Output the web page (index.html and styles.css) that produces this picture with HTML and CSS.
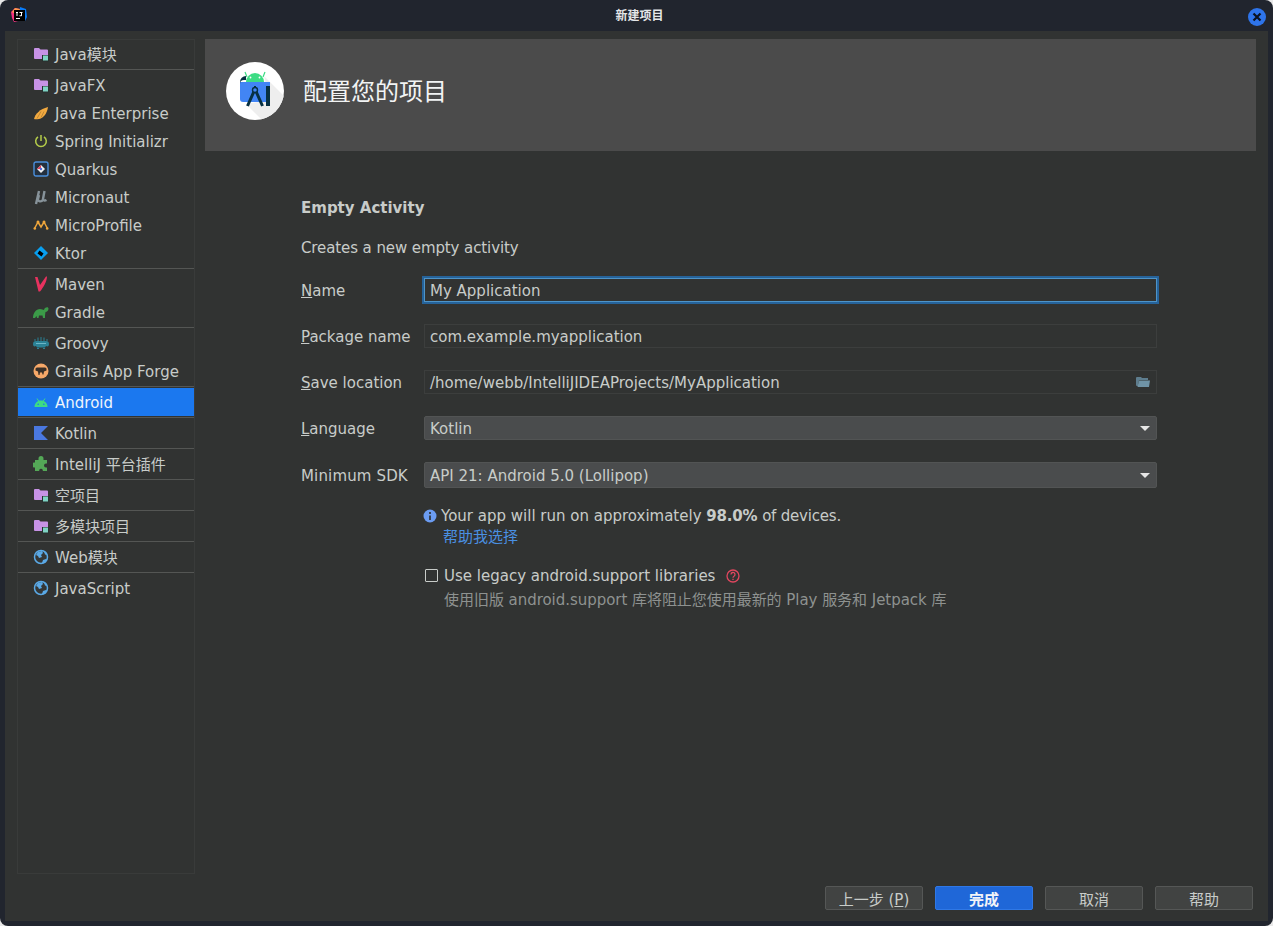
FILE: index.html
```html
<!DOCTYPE html>
<html lang="zh">
<head>
    <meta charset="UTF-8">
    <title>新建项目</title>
    <link rel="stylesheet" href="styles.css">
</head>
<body>
    <div class="window">
        <header class="titlebar">
            <svg class="app-icon" width="16" height="16" viewBox="0 0 16 16">
                <path d="M0 5l4-4 5 1-2 12-4 1-2-4z" fill="#f5317f"/>
                <path d="M9 0l6 2 1 8-2 4-6-6z" fill="#087cfa"/>
                <path d="M1 5l3-4 5 1-3 6z" fill="#fc9a4a"/>
                <rect x="3" y="3" width="11" height="11" fill="#000"/>
                <path d="M5 5h2v1H6.500v3H5.500V6H5zM8.500 5h3v1H11v2.500c0 .5-.5.8-1 .8H8.500v-1H10V6H8.500zM5 11h4v1H5z" fill="#fff"/>
            </svg>
            <span class="window-title">新建项目</span>
            <span class="close-btn">
                <svg width="10" height="10" viewBox="0 0 10 10"><path d="M1.500 1.500l7 7M8.500 1.500l-7 7" stroke="#0b1220" stroke-width="2.200"/></svg>
            </span>
        </header>
        <div class="panel">
            <div class="main">
                <nav class="sidebar">
                    <div class="item cjk">
                        <svg class="icon" viewBox="0 0 16 16"><use href="#module"/></svg>Java模块
                    </div>
                    <div class="sep"></div>
                    <div class="item">
                        <svg class="icon" viewBox="0 0 16 16"><use href="#module"/></svg>JavaFX
                    </div>
                    <div class="item">
                        <svg class="icon" viewBox="0 0 16 16"><path d="M1 14c1-5 6-10 14-12-1 6-4 11-9 12-2 .3-4 .3-5 0z" fill="#f2a93f"/><path d="M4 13.500l4-7M8 12.500l3-6" stroke="#a87a30" stroke-width=".7"/></svg>Java Enterprise
                    </div>
                    <div class="item">
                        <svg class="icon" viewBox="0 0 16 16"><path d="M5 3.800a5.300 5.300 0 1 0 6 0" fill="none" stroke="#b4cc4a" stroke-width="1.500"/><path d="M8 2v6" stroke="#b4cc4a" stroke-width="1.500"/></svg>Spring Initializr
                    </div>
                    <div class="item">
                        <svg class="icon" viewBox="0 0 16 16"><rect x="1" y="1" width="14" height="14" rx="2" fill="#24303e" stroke="#4a8fdc" stroke-width="1.400"/><path d="M8 4l4 4-4 4-4-4z" fill="#f0f0f0"/><path d="M8 4L4 8l4 0z" fill="#e0405a"/><circle cx="8" cy="8" r="1.200" fill="#4a6fdc"/></svg>Quarkus
                    </div>
                    <div class="item">
                        <svg class="icon" viewBox="0 0 16 16"><path d="M6 2L3 15M6 6l-1 4c-.5 2.500 3.500 3.500 5 .5M11.500 2L10 10c-.3 1.500 1.500 2 3.500 1" fill="none" stroke="#87939a" stroke-width="2.400"/></svg>Micronaut
                    </div>
                    <div class="item">
                        <svg class="icon" viewBox="0 0 16 16"><path d="M1.500 11.500L5 5l3 5 3-5 3.500 6.500" fill="none" stroke="#f0a73c" stroke-width="1.500"/><circle cx="5" cy="5" r="1.500" fill="#f0a73c"/><circle cx="11" cy="5" r="1.500" fill="#f0a73c"/><circle cx="1.800" cy="11.500" r="1.300" fill="#f0a73c"/><circle cx="14.200" cy="11.500" r="1.300" fill="#f0a73c"/></svg>MicroProfile
                    </div>
                    <div class="item">
                        <svg class="icon" viewBox="0 0 16 16"><path d="M8 1l7 7-7 7-7-7z" fill="#089ff0"/><path d="M6.500 5.500l4 3-2 3-4-3z" fill="#000"/></svg>Ktor
                    </div>
                    <div class="sep"></div>
                    <div class="item">
                        <svg class="icon" viewBox="0 0 16 16"><path d="M2 1h2.500L7 9l6-8.500h1c0 4.500-3.500 11-7 15H5.500z" fill="#e8325f"/></svg>Maven
                    </div>
                    <div class="item">
                        <svg class="icon" viewBox="0 0 16 16"><path d="M0 14c0-5 3-9 7-9 2 0 3 1 4 1 0-2 4-4 4.500-1.500 0 2-1.500 3.500-3 3.500-.5 2-.5 4-.5 6H10l-.5-2.500H6L5.500 14H4l-.5-2-1.500 2z" fill="#3b9a48"/></svg>Gradle
                    </div>
                    <div class="sep"></div>
                    <div class="item">
                        <svg class="icon" viewBox="0 0 16 16"><path d="M0 9c0-2 1-3 3-3h10c2 0 3 1 3 3s-1 3-3 2l-1 1.500H4L3 11c-2 1-3 0-3-2z" fill="#2b8296"/><path d="M2 6V4M5 6V2.500M8 6V2M11 6V2.500M14 6V4" stroke="#2b8296"/><path d="M3 8.500h10" stroke="#7fc4d2" stroke-width=".8"/><path d="M4 13.500h2M10 13.500h2" stroke="#2b8296" stroke-width="1.200"/></svg>Groovy
                    </div>
                    <div class="item">
                        <svg class="icon" viewBox="0 0 16 16"><circle cx="8" cy="8" r="7.500" fill="#f7a868"/><path d="M2.500 6c0-1 1-1.500 2-1.500h7c1 0 2 .5 2 1.500v1.500l-2.500 1-.5 3h-1L9 9.500H7l-.5 2.500h-1L5 8.500l-2.500-1z" fill="#3a3028"/></svg>Grails App Forge
                    </div>
                    <div class="sep"></div>
                    <div class="item selected">
                        <svg class="icon" viewBox="0 0 16 16"><path d="M1.500 13c0-4 3-6.500 6.500-6.500s6.500 2.500 6.500 6.500z" fill="#3ddc84"/><path d="M4 4.500l2 3M12 4.500l-2 3" stroke="#3ddc84"/><circle cx="5.200" cy="10.200" r=".8" fill="#1b78ef"/><circle cx="10.800" cy="10.200" r=".8" fill="#1b78ef"/></svg>Android
                    </div>
                    <div class="sep"></div>
                    <div class="item">
                        <svg class="icon" viewBox="0 0 16 16"><path d="M1 1h14L8 8l7 7H1z" fill="#4a78e0"/></svg>Kotlin
                    </div>
                    <div class="sep"></div>
                    <div class="item cjk">
                        <svg class="icon" viewBox="0 0 16 16"><path d="M5.500 2.500a2.500 2.500 0 0 1 5 0V4H14v3.500h-1a2 2 0 0 0 0 4h1V15H9.800v-1a2 2 0 0 0-3.600 0v1H2v-3.500H1a2.500 2.500 0 0 1 0-5h1V4h3.500z" fill="#54a857"/></svg>IntelliJ 平台插件
                    </div>
                    <div class="sep"></div>
                    <div class="item cjk">
                        <svg class="icon" viewBox="0 0 16 16"><use href="#module"/></svg>空项目
                    </div>
                    <div class="sep"></div>
                    <div class="item cjk">
                        <svg class="icon" viewBox="0 0 16 16"><use href="#module"/></svg>多模块项目
                    </div>
                    <div class="sep"></div>
                    <div class="item cjk">
                        <svg class="icon" viewBox="0 0 16 16"><use href="#globe"/></svg>Web模块
                    </div>
                    <div class="sep"></div>
                    <div class="item">
                        <svg class="icon" viewBox="0 0 16 16"><use href="#globe"/></svg>JavaScript
                    </div>
                </nav>
                <section class="content">
                    <div class="banner">
                        <div class="logo">
                            <svg width="58" height="58" viewBox="0 0 58 58">
                                <path d="M38 14l20 20v24H36L20 42l24-4z" fill="#eeeeee"/>
                                <path d="M21 15l-2-5M37 15l2-5" stroke="#3ddc84" stroke-width="1.200"/>
                                <path d="M20 20a9 9 0 0 1 18 0z" fill="#3ddc84"/>
                                <circle cx="24.500" cy="15.500" r=".9" fill="#fff"/>
                                <circle cx="33.500" cy="15.500" r=".9" fill="#fff"/>
                                <path d="M14 20h30v20H17a3 3 0 0 1-3-3z" fill="#4285f4"/>
                                <path d="M14 20a6 6 0 0 1 6-6v4h-2a4 4 0 0 0-4 4z" fill="#073042"/>
                                <rect x="40" y="24" width="4" height="20" fill="#073042"/>
                                <path d="M29 27l-7.500 17M29 27l7.500 17" stroke="#073042" stroke-width="3" fill="none"/>
                                <path d="M29 27v-3" stroke="#073042" stroke-width="2"/>
                                <circle cx="29" cy="28" r="2.500" fill="#4285f4" stroke="#073042" stroke-width="1.400"/>
                            </svg>
                        </div>
                        <h1 class="banner-title">配置您的项目</h1>
                    </div>
                    <div class="form">
                        <h2 class="form-title">Empty Activity</h2>
                        <p class="form-desc">Creates a new empty activity</p>
                        <div class="row">
                            <label><u>N</u>ame</label>
                            <div class="field focused">My Application</div>
                        </div>
                        <div class="row">
                            <label><u>P</u>ackage name</label>
                            <div class="field">com.example.myapplication</div>
                        </div>
                        <div class="row">
                            <label><u>S</u>ave location</label>
                            <div class="field">
                                /home/webb/IntelliJIDEAProjects/MyApplication
                                <svg class="folder" width="16" height="16" viewBox="0 0 16 16"><path d="M1 4a1 1 0 0 1 1-1h4l1 1h6v2H4L3 12H2a1 1 0 0 1-1-1z" fill="#5e7d8e"/><path d="M4 6.500h11L14 13H2.500z" fill="#6f93a6"/></svg>
                            </div>
                        </div>
                        <div class="row">
                            <label><u>L</u>anguage</label>
                            <div class="select">Kotlin<span class="caret"></span></div>
                        </div>
                        <div class="row sdk">
                            <label>Minimum SDK</label>
                            <div class="select">API 21: Android 5.0 (Lollipop)<span class="caret"></span></div>
                        </div>
                        <div class="notes">
                            <div class="note-line">
                                <svg class="info" width="14" height="14" viewBox="0 0 14 14"><circle cx="7" cy="7" r="6.500" fill="#6b9cf2"/><path d="M7 3v2M7 6.500V11" stroke="#2b2d2c" stroke-width="1.600"/></svg>
                                <span class="note-text">Your app will run on approximately <b>98.0%</b> <span class="note-tail">of devices.</span></span>
                            </div>
                            <a class="help-link">帮助我选择</a>
                            <div class="check-line">
                                <span class="checkbox"></span>
                                <span class="check-text">Use legacy android.support libraries</span>
                                <svg class="help" width="14" height="14" viewBox="0 0 14 14"><circle cx="7" cy="7" r="6" fill="none" stroke="#e2475f" stroke-width="1.300"/><path d="M5 5.500a2 2 0 1 1 3 1.700c-.7.400-1 .8-1 1.500M7 9.800v1.300" fill="none" stroke="#e2475f" stroke-width="1.300"/></svg>
                            </div>
                            <p class="check-desc">使用旧版 android.support 库将阻止您使用最新的 Play 服务和 Jetpack 库</p>
                        </div>
                    </div>
                </section>
            </div>
            <footer class="buttons">
                <button class="btn">上一步 (<u>P</u>)</button>
                <button class="btn primary">完成</button>
                <button class="btn">取消</button>
                <button class="btn">帮助</button>
            </footer>
        </div>
    </div>
    <svg class="defs" width="0" height="0">
        <defs>
            <g id="module">
                <path d="M1 3a1 1 0 0 1 1-1h4l1.500 1.500H14a1 1 0 0 1 1 1V12a1 1 0 0 1-1 1H2a1 1 0 0 1-1-1z" fill="#c792e6"/>
                <rect x="9" y="9" width="6.500" height="6.500" fill="#26302e"/>
                <rect x="10" y="9.500" width="5" height="5" fill="#7fd3c4"/>
            </g>
            <g id="globe">
                <circle cx="8" cy="8" r="6.500" fill="#353736" stroke="#5aa9e6" stroke-width="1.500"/>
                <path d="M3 6l2-3 4-1 1 2-2 2 1 2-3 1-1-2zM9 14l1-3 3-1 1 1-2 3zM11 2.500l1 3 2 .5-1-3z" fill="#5aa9e6"/>
            </g>
        </defs>
    </svg>
</body>
</html>
```

FILE: styles.css
```css
* {
    box-sizing: border-box;
}

html, body {
    margin: 0;
    height: 100%;
    overflow: hidden;
}

body {
    background-color: #e8e8e8;
    font-family: "DejaVu Sans", "Noto Sans CJK SC", sans-serif;
    font-size: 15px;
    color: #c8ccc9;
}

.defs {
    position: absolute;
}

.window {
    display: flex;
    flex-direction: column;
    height: 926px;
    padding: 0 5px 5px;
    background-color: #21252e;
    border-radius: 8px;
}

.titlebar {
    display: flex;
    align-items: center;
    justify-content: center;
    position: relative;
    height: 31px;
    flex: none;
}

.app-icon {
    position: absolute;
    left: 6px;
    top: 7px;
}

.window-title {
    margin: 0 0 2px 6px;
    font-size: 12px;
    font-weight: bold;
    color: #e4e6e8;
}

.close-btn {
    position: absolute;
    right: 2px;
    top: 8px;
    display: flex;
    align-items: center;
    justify-content: center;
    width: 18px;
    height: 18px;
    border-radius: 50%;
    background-color: #2e74ea;
}

.panel {
    flex: 1;
    display: flex;
    flex-direction: column;
    background-color: #313332;
    padding: 8px 12px 11px 12px;
    min-height: 0;
}

.main {
    flex: 1;
    display: flex;
    gap: 10px;
    min-height: 0;
}

.sidebar {
    width: 178px;
    flex: none;
    height: 835px;
    border: 1px solid #393b3a;
}

/* latin text sits 1px low in these rows, cjk 1px high; the margins keep the icon put */
.item {
    display: flex;
    align-items: center;
    height: 28px;
    padding: 2px 0 0 15px;
    white-space: nowrap;
}

.item .icon {
    width: 16px;
    height: 16px;
    margin: -2px 6px 0 0;
    flex: none;
}

.item.cjk {
    padding: 0 0 2px 15px;
}

.item.cjk .icon {
    margin-top: 2px;
}

.item.selected {
    background-color: #1b78ef;
    color: #eef4fc;
}

.sep {
    height: 1px;
    margin: 1px 0;
    background-color: #545654;
}

.content {
    flex: 1;
    min-width: 0;
}

.banner {
    display: flex;
    align-items: center;
    height: 112px;
    padding: 0 0 8px 21px;
    background-color: #4b4b4b;
}

.logo {
    width: 58px;
    height: 58px;
    border-radius: 50%;
    background-color: #fff;
    overflow: hidden;
    margin-right: 19px;
}

.banner-title {
    margin: 0;
    padding-bottom: 4px;
    font-size: 24px;
    font-weight: normal;
    color: #f2f4f4;
}

.form {
    width: 856px;
    margin-left: 96px;
    padding-top: 48px;
}

.form-title {
    margin: 0;
    font-size: 15px;
    font-weight: bold;
    line-height: 18px;
}

.form-desc {
    margin: 22px 0 0;
    line-height: 18px;
    letter-spacing: -0.1px;
}

.row {
    display: flex;
    align-items: center;
    height: 24px;
    margin-top: 21px;
}

.row + .row {
    margin-top: 22px;
}

.row label {
    width: 123px;
    flex: none;
    padding-top: 2px;
}

.row.sdk label {
    letter-spacing: 0.15px;
}

.field, .select {
    flex: 1;
    height: 24px;
    display: flex;
    align-items: center;
    justify-content: space-between;
    padding: 2px 5px 0;
    white-space: nowrap;
}

.field {
    border: 1px solid #3c3e3d;
}

.field.focused {
    border: 1px solid #4e94c8;
    box-shadow: 0 0 0 2px #26639a;
}

.folder {
    margin-top: -2px;
}

.select {
    background-color: #4a4c4d;
    border: 1px solid #525454;
    border-radius: 2px;
}

.caret {
    width: 0;
    height: 0;
    border-left: 5px solid transparent;
    border-right: 5px solid transparent;
    border-top: 5px solid #e6e6e6;
    margin: -2px 1px 0 0;
}

.row.sdk {
    height: 26px;
}

.row.sdk .select {
    height: 26px;
}

.notes {
    margin-left: 123px;
    padding-top: 18px;
}

.note-line {
    display: flex;
    align-items: center;
    gap: 4px;
    line-height: 18px;
}

.note-line .info {
    margin-left: -1px;
}

.note-text {
    padding-top: 1px;
}

.note-line b {
    font-weight: bold;
    letter-spacing: -0.2px;
}

.note-tail {
    letter-spacing: -0.2px;
}

.help-link {
    display: block;
    margin: 3px 0 0 19px;
    line-height: 18px;
    color: #4a90e2;
}

.check-line {
    display: flex;
    align-items: center;
    margin-top: 20px;
    line-height: 18px;
}

.check-text {
    padding-top: 1px;
}

.checkbox {
    width: 13px;
    height: 13px;
    margin: 0 6px 0 1px;
    border: 1px solid #c8ccc9;
    border-radius: 1px;
}

.help {
    margin-left: 11px;
}

.check-desc {
    margin: 6px 0 0 20px;
    line-height: 18px;
    letter-spacing: -0.04px;
    color: #8e9290;
}

.buttons {
    display: flex;
    justify-content: flex-end;
    gap: 12px;
    padding-right: 3px;
    flex: none;
}

.btn {
    width: 98px;
    height: 24px;
    padding: 0;
    font-family: inherit;
    font-size: 15px;
    color: #c8ccc9;
    background-color: #414342;
    border: 1px solid #555756;
    border-radius: 2px;
}

.btn.primary {
    background-color: #1f67d8;
    border-color: #2f78e6;
    color: #f2f4f8;
    font-weight: bold;
}
```
